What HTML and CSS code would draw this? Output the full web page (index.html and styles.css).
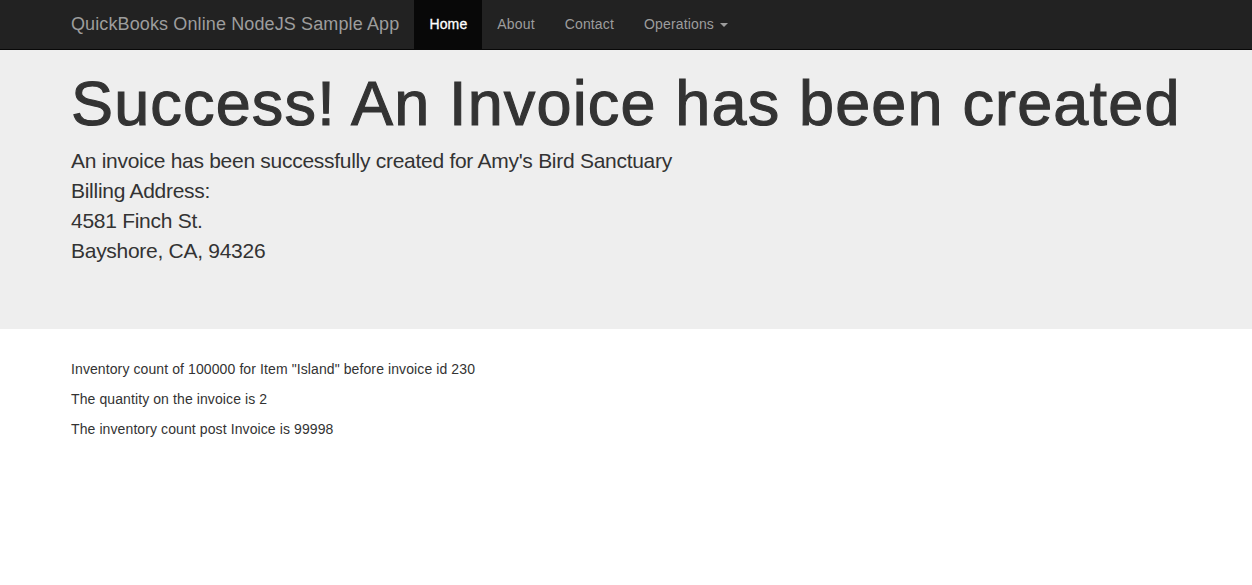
FILE: index.html
```html
<!DOCTYPE html>
<html>
<head>
<meta charset="utf-8">
<title>QuickBooks Online NodeJS Sample App</title>
<link rel="stylesheet" href="styles.css">
</head>
<body>
<nav class="navbar">
  <div class="container nav-inner">
    <a class="brand" href="#">QuickBooks Online NodeJS Sample App</a>
    <ul class="nav">
      <li class="active"><a href="#">Home</a></li>
      <li><a href="#">About</a></li>
      <li><a href="#">Contact</a></li>
      <li><a href="#">Operations <span class="caret"></span></a></li>
    </ul>
  </div>
</nav>
<div class="jumbotron">
  <div class="container">
    <h1>Success! An Invoice has been created</h1>
    <p>An invoice has been successfully created for Amy's Bird Sanctuary<br>Billing Address:<br>4581 Finch St.<br>Bayshore, CA, 94326</p>
  </div>
</div>
<div class="container content">
  <p>Inventory count of 100000 for Item "Island" before invoice id 230</p>
  <p>The quantity on the invoice is 2</p>
  <p>The inventory count post Invoice is 99998</p>
</div>
</body>
</html>
```
FILE: styles.css
```css
* { box-sizing: border-box; }
html, body { margin: 0; padding: 0; }
body {
  font-family: "Liberation Sans", Arial, sans-serif;
  font-size: 14px;
  line-height: 20px;
  color: #333;
  background: #fff;
}
.container {
  max-width: 1140px;
  margin: 0 auto;
  padding: 0 15px;
}
.navbar {
  background: #222;
  border-bottom: 1px solid #080808;
  height: 50px;
}
.nav-inner {
  display: flex;
  align-items: stretch;
  height: 49px;
}
.brand {
  margin-left: -15px;
  padding: 0 15px;
  font-size: 18px;
  letter-spacing: 0.12px;
  line-height: 49px;
  color: #9d9d9d;
  text-decoration: none;
}
.nav {
  display: flex;
  list-style: none;
  margin: 0;
  padding: 0;
}
.nav li a {
  display: block;
  padding: 0 15px;
  line-height: 49px;
  letter-spacing: 0.15px;
  color: #9d9d9d;
  text-decoration: none;
}
.nav li.active a {
  background: #080808;
  color: #fff;
  -webkit-text-stroke: 0.3px #fff;
}
.caret {
  display: inline-block;
  width: 0;
  height: 0;
  margin-left: 2px;
  vertical-align: middle;
  border-top: 4px solid #9d9d9d;
  border-left: 4px solid transparent;
  border-right: 4px solid transparent;
}
.jumbotron {
  background: #eee;
  padding: 19px 0 48px;
  margin-bottom: 30px;
}
.jumbotron h1 {
  font-size: 63px;
  line-height: 1.1;
  font-weight: 400;
  letter-spacing: 1.15px;
  white-space: nowrap;
  -webkit-text-stroke: 1.1px #333;
  margin: 0 0 8px;
  color: #333;
}
.jumbotron p {
  font-size: 21px;
  line-height: 30px;
  letter-spacing: -0.28px;
  margin: 0 0 15px;
}
.content p {
  margin: 0 0 10px;
  letter-spacing: 0.1px;
}
```
